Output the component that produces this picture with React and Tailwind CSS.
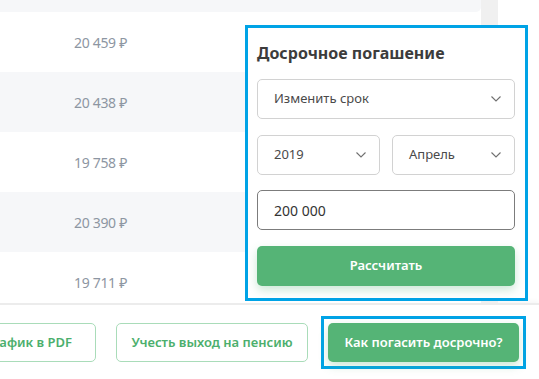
import React from "react";

const rows = [
  { amount: "", shade: true },
  { amount: "20 459 ₽", shade: false },
  { amount: "20 438 ₽", shade: true },
  { amount: "19 758 ₽", shade: false },
  { amount: "20 390 ₽", shade: true },
  { amount: "19 711 ₽", shade: false },
];

const Chevron = () => (
  <svg width="10" height="6" viewBox="0 0 10 6" fill="none" className="shrink-0">
    <polyline points="0.5,0.5 5,5 9.5,0.5" stroke="#707070" strokeWidth="1.1" />
  </svg>
);

const Select = ({ value, className = "" }) => (
  <div className={`flex items-center justify-between h-10 pl-4 pr-[13px] border border-[#d2d2d2] rounded-[5px] bg-white ${className}`}>
    <span className="text-[13px] text-[#4a4a4a]">{value}</span>
    <Chevron />
  </div>
);

export default function App() {
  return (
    <div className="relative w-[539px] h-[379px] overflow-hidden bg-white font-['Noto_Sans',sans-serif]">
      <div className="flex h-[303px] overflow-hidden">
        <div className="w-[481px] -mt-[48px]">
          {rows.map((r, i) => (
            <div
              key={i}
              className={`flex items-center h-[60px] rounded-r-[5px] ${r.shade ? "bg-[#f6f7f9]" : "bg-white"}`}
            >
              <div className="w-[127px] text-right text-[14px] tracking-[-0.3px] text-[#8d96a2]">{r.amount}</div>
            </div>
          ))}
        </div>
        <div className="w-[17px] bg-[#f0f0f0]" />
      </div>

      <div className="h-[76px] border-t-2 border-[#ececec] shadow-[0_-2px_4px_rgba(0,0,0,0.04)] flex items-center justify-end gap-5 pr-5 pt-[1px]">
        <button className="h-[39px] w-[214px] shrink-0 border border-[#a9dcb9] rounded-[5px] text-[13px] font-semibold text-[#4caf6d] flex items-center justify-end pr-[23px]">
          Скачать график в PDF
        </button>
        <button className="h-[39px] w-[192px] shrink-0 border border-[#a9dcb9] rounded-[5px] text-[13px] font-semibold text-[#4caf6d]">
          Учесть выход на пенсию
        </button>
        <div className="-m-[7px] p-1 border-[3px] border-[#00a3e6]">
          <button className="h-[39px] w-[191px] rounded-[5px] bg-[#55b476] text-white text-[13px] font-semibold shadow-[0_4px_10px_rgba(85,180,118,0.3)]">
            Как погасить досрочно?
          </button>
        </div>
      </div>

      <div className="absolute left-[245px] top-[25px] w-[283px] border-[3px] border-[#00a3e6] bg-white pl-[9px] pr-[10px] pt-[13px] pb-[12px]">
        <div className="text-[16px] font-bold text-[#3c3c3c] leading-[24px] mb-[14px]">Досрочное погашение</div>
        <Select value="Изменить срок" />
        <div className="flex gap-3 mt-4">
          <Select value="2019" className="flex-1" />
          <Select value="Апрель" className="flex-1" />
        </div>
        <div className="mt-[15px] h-10 flex items-center pl-4 border border-[#7c7c7c] rounded-[5px] text-[14px] text-[#333]">
          200 000
        </div>
        <button className="mt-4 w-full h-10 rounded-[5px] bg-[#55b476] text-white text-[13px] font-semibold shadow-[0_4px_10px_rgba(85,180,118,0.3)]">
          Рассчитать
        </button>
      </div>
    </div>
  );
}
